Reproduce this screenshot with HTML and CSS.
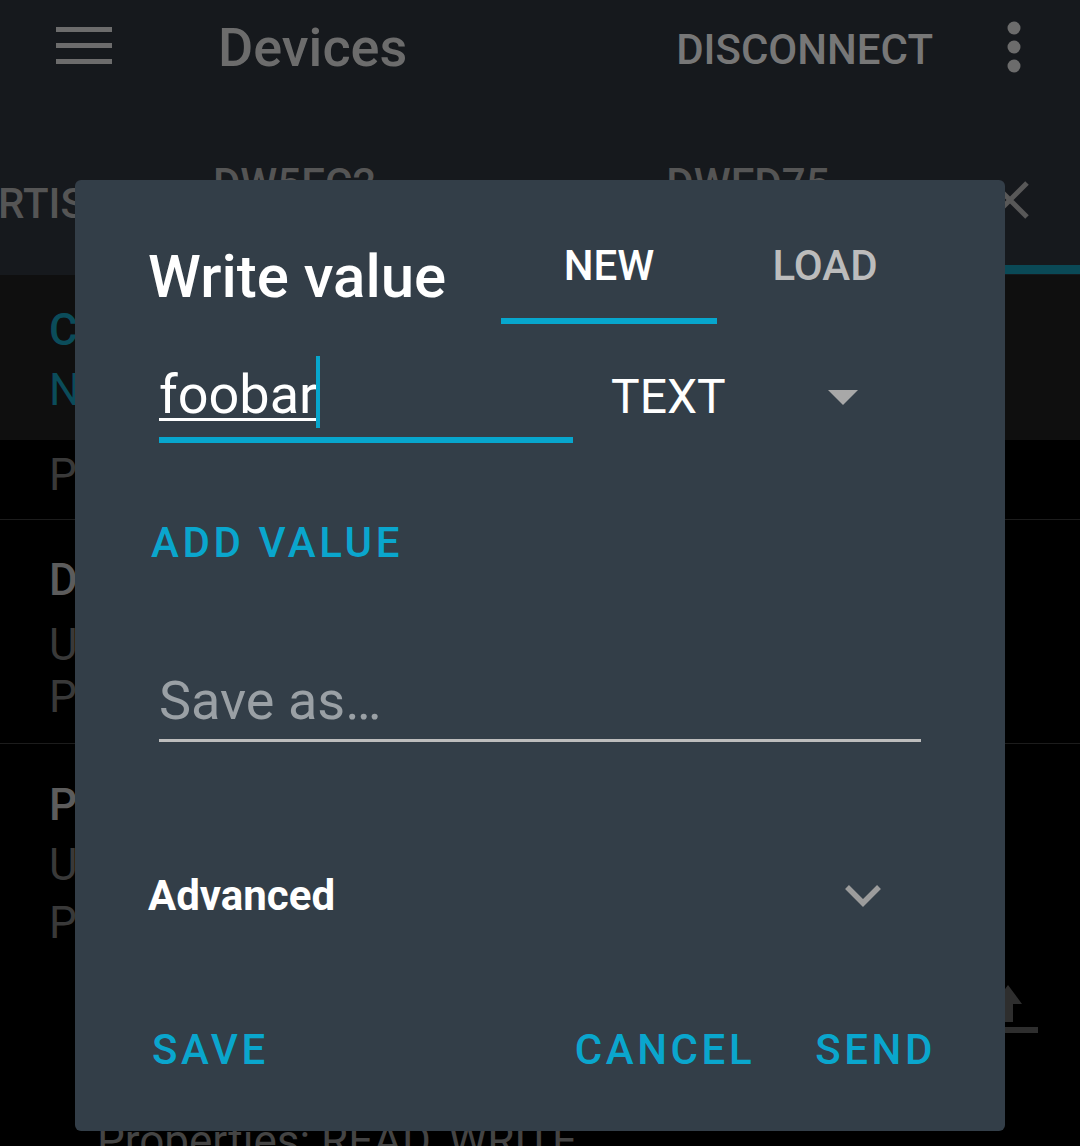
FILE: index.html
```html
<!DOCTYPE html>
<html>
<head>
<meta charset="utf-8">
<link rel="stylesheet" href="styles.css">
</head>
<body>
<div class="screen">
  <header class="appbar">
    <div class="toolbar">
      <svg class="menu" width="56" height="37" viewBox="0 0 56 37"><rect x="0" y="0" width="56" height="5" fill="#6c6c6c"/><rect x="0" y="16" width="56" height="5" fill="#6c6c6c"/><rect x="0" y="32" width="56" height="5" fill="#6c6c6c"/></svg>
      <div class="title">Devices</div>
      <div class="spacer"></div>
      <div class="action">DISCONNECT</div>
      <svg class="dots" width="16" height="52" viewBox="0 0 16 52"><circle cx="8" cy="7" r="6.5" fill="#6c6c6c"/><circle cx="8" cy="26" r="6.5" fill="#6c6c6c"/><circle cx="8" cy="45" r="6.5" fill="#6c6c6c"/></svg>
    </div>
    <div class="tabs">
      <div class="tabrow">
        <div class="tab tab-a">RTIS</div>
        <div class="tab tab-b">DW5EC2</div>
        <div class="tab tab-c">DWED75</div>
        <svg class="close" width="40" height="40" viewBox="0 0 40 40"><path d="M3 3L37 37M37 3L3 37" stroke="#585858" stroke-width="5"/></svg>
      </div>
      <div class="indicator"></div>
    </div>
  </header>
  <main class="list">
    <section class="row-head">
      <div class="ln ln-c">Custom Service</div>
      <div class="ln ln-n">Name unknown</div>
    </section>
    <div class="ln ln-p1">Primary service</div>
    <div class="divider d1"></div>
    <div class="ln ln-bold ln-d">Device Name</div>
    <div class="ln ln-u1">UUID: 2A00</div>
    <div class="ln ln-p2">Properties: READ</div>
    <div class="divider d2"></div>
    <div class="ln ln-bold ln-p3">Peripheral Preferred</div>
    <div class="ln ln-u2">UUID: 2A04</div>
    <div class="ln ln-p4">Properties: READ</div>
    <div class="ln ln-props">Properties: READ, WRITE</div>
    <svg class="upload" width="80" height="60" viewBox="0 0 80 60"><path d="M38 5L52 24H43V42H33V24H24Z" fill="#2e2e2e"/><rect x="8" y="47" width="60" height="6" fill="#2e2e2e"/></svg>
  </main>

  <div class="dialog">
    <div class="dlg-head">
      <div class="dlg-title">Write value</div>
      <div class="dlg-tabs">
        <div class="dtab active">NEW</div>
        <div class="dtab">LOAD</div>
      </div>
    </div>
    <div class="value-row">
      <div class="field field-value"><span class="typed">foobar</span><span class="cursor"></span></div>
      <div class="type">TEXT</div>
      <svg class="caret" width="30" height="15" viewBox="0 0 30 15"><path d="M0 0H30L15 15Z" fill="#a8a8a8"/></svg>
    </div>
    <div class="btn add">ADD VALUE</div>
    <div class="field field-save">Save as…</div>
    <div class="adv-row">
      <div class="adv">Advanced</div>
      <svg class="chev" width="38" height="24" viewBox="0 0 38 24"><path d="M3 3L19 19L35 3" fill="none" stroke="#9c9c9c" stroke-width="5.5"/></svg>
    </div>
    <div class="actions">
      <div class="btn">SAVE</div>
      <div class="spacer"></div>
      <div class="btn">CANCEL</div>
      <div class="btn send">SEND</div>
    </div>
  </div>
</div>
</body>
</html>
```
FILE: styles.css
```css
* { box-sizing: border-box; }
html, body { margin: 0; padding: 0; background: #000; }
body { font-family: Roboto, "Noto Sans", sans-serif; overflow: hidden; }
.screen { position: relative; width: 1080px; height: 1146px; overflow: hidden; background: #000; }

.appbar { background: #16191d; height: 275px; display: flex; flex-direction: column; }
.toolbar { height: 96px; display: flex; align-items: flex-start; }
.menu { margin: 27px 0 0 56px; flex: none; }
.title { margin: 21px 0 0 106px; font-size: 54px; line-height: 54px; font-weight: 500; color: #6c6c6c; }
.spacer { flex: 1; }
.action { margin-top: 29px; font-size: 42px; line-height: 42px; font-weight: 500; color: #777; }
.dots { margin: 21px 58px 0 73px; flex: none; }

.tabs { height: 179px; display: flex; flex-direction: column; }
.tabrow { height: 169px; display: flex; align-items: flex-start; }
.tab { font-size: 42px; line-height: 42px; font-weight: 500; color: #555; white-space: nowrap; }
.tab-a { margin: 87px 0 0 -2px; }
.tab-b { margin: 67px 0 0 127px; }
.tab-c { margin: 67px 0 0 290px; }
.close { margin: 84px 0 0 160px; flex: none; }
.indicator { margin-left: 530px; height: 9px; background: #0a4956; }

.list { display: flex; flex-direction: column; }
.ln { font-size: 44px; line-height: 44px; padding-left: 49px; color: #393939; white-space: nowrap; }
.ln-bold { font-weight: 500; color: #5c5c5c; }
.row-head { background: #0f0f0f; padding: 33px 0 28px; }
.ln-c { font-weight: 500; color: #0b4c5a; }
.ln-n { color: #0b4c5a; margin-top: 16px; }
.ln-p1 { margin-top: 13px; }
.divider { height: 1px; background: #1c1c1c; }
.d1 { margin-top: 22px; }
.ln-d { margin-top: 38px; }
.ln-u1 { margin-top: 21px; }
.ln-p2 { margin-top: 8px; }
.d2 { margin-top: 24px; }
.ln-p3 { margin-top: 39px; }
.ln-u2 { margin-top: 16px; }
.ln-p4 { margin-top: 14px; }
.ln-props { margin-top: 174px; padding-left: 97px; color: #444; }
.upload { position: absolute; left: 970px; top: 980px; }

.dialog { position: absolute; left: 75px; top: 180px; width: 930px; height: 951px; background: #333e48; border-radius: 6px; display: flex; flex-direction: column; }
.dlg-head { height: 144px; display: flex; align-items: flex-end; justify-content: space-between; padding: 0 72px 0 73px; }
.dlg-title { font-size: 60px; line-height: 60px; font-weight: 500; color: #fff; padding-bottom: 17px; }
.dlg-tabs { display: flex; }
.dtab { width: 216px; text-align: center; font-size: 42px; line-height: 42px; font-weight: 500; color: #bcbcbc; padding-bottom: 31px; border-bottom: 6px solid transparent; }
.dtab.active { color: #fff; border-bottom-color: #07a6cd; }

.value-row { display: flex; align-items: baseline; }
.field { margin-left: 84px; font-size: 54px; line-height: 54px; color: #fff; }
.field-value { width: 414px; margin-top: 44px; padding-bottom: 9px; border-bottom: 6px solid #07a6cd; white-space: nowrap; }
.typed { text-decoration: underline; text-decoration-thickness: 3px; text-underline-offset: 5px; }
.cursor { display: inline-block; width: 4px; height: 72px; background: #07a6cd; vertical-align: -15px; margin: -13px 0 0 -1px; }
.type { margin-left: 38px; font-size: 48px; line-height: 48px; color: #fff; }
.caret { align-self: flex-start; margin: 66px 0 0 102px; }

.btn { font-size: 42px; line-height: 42px; font-weight: 500; letter-spacing: 3.6px; color: #0aa6cd; white-space: nowrap; }
.add { margin: 79px 0 0 76px; }
.field-save { width: 762px; margin-top: 110px; padding-bottom: 11px; border-bottom: 3px solid #bdbdbd; color: #9aa0a5; }

.adv-row { display: flex; align-items: center; margin-top: 133px; padding: 0 0 0 73px; }
.adv { font-size: 42px; line-height: 42px; font-weight: 700; color: #fff; }
.chev { margin-left: 509px; }

.actions { display: flex; margin-top: 112px; padding: 0 69px 0 77px; }
.send { margin-left: 60px; }
```
